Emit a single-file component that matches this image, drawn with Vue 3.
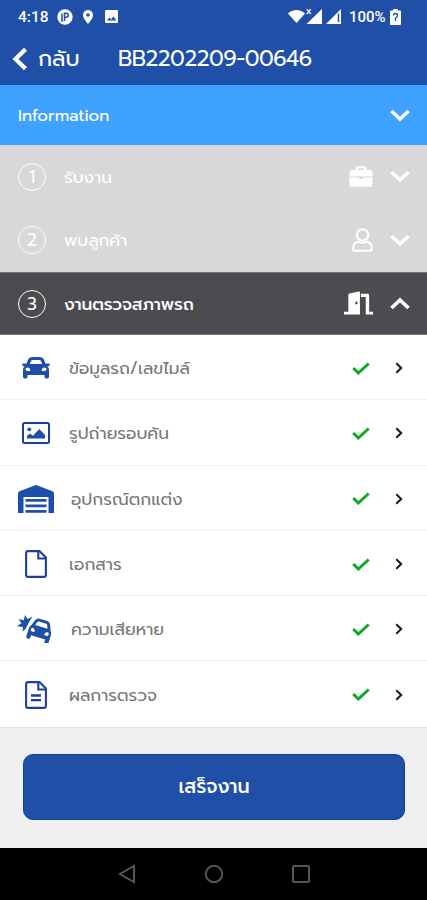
<template>
  <div class="screen">
    <header class="app-header">
      <div class="status-bar">
        <span class="clock">4:18</span>
        <svg class="status-p" viewBox="0 0 16 16">
          <circle cx="8" cy="8" r="7.700" fill="#fff" />
          <path d="M5 13V4.500M7.500 12V4.300h1.700a2 2 0 0 1 0 4H7.500" fill="none" stroke="#1f4fa7" stroke-width="1.500" />
        </svg>
        <svg class="status-pin" viewBox="0 0 10 14">
          <path fill="#fff" fill-rule="evenodd" d="M5 0a5 5 0 0 1 5 5c0 3.500-5 9-5 9S0 8.500 0 5a5 5 0 0 1 5-5zm0 3.200a1.800 1.800 0 1 0 0 3.600 1.800 1.800 0 0 0 0-3.600z" />
        </svg>
        <svg class="status-pic" viewBox="0 0 13 13">
          <rect width="13" height="13" rx="1.200" fill="#fff" />
          <path d="M2 10.500l2.400-3 1.700 1.900 2.300-3.100 3 4.200z" fill="#1f4fa7" />
        </svg>
        <span class="spacer"></span>
        <svg class="status-net" viewBox="0 0 54 17">
          <path d="M0 5.500C4.500.8 12.500.8 17 5.500L8.500 15z" fill="#fff" />
          <path d="M18.500 16L34 1v15z" fill="#fff" />
          <path d="M18.800 1.200l4 4.800M22.800 1.200l-4 4.800" stroke="#fff" stroke-width="1.200" />
          <path d="M38 16L53 1v15z" fill="#fff" />
          <path d="M50.500 5.500v8.500" stroke="#1f4fa7" stroke-width="1.500" />
        </svg>
        <span class="percent">100%</span>
        <svg class="status-battery" viewBox="0 0 11 16">
          <path d="M3.300 0h4.400v1.500H10a1 1 0 0 1 1 1V15a1 1 0 0 1-1 1H1a1 1 0 0 1-1-1V2.500a1 1 0 0 1 1-1h2.300z" fill="#fff" />
          <path d="M3.500 6.500q0-2 2-2t2 2q0 1.400-2 2.800V12" fill="none" stroke="#1f4fa7" stroke-width="1.300" />
        </svg>
      </div>
      <div class="title-bar">
        <svg class="back-icon" viewBox="0 0 16 24">
          <path d="M13.500 2.200L3.500 12l10 9.800" fill="none" stroke="#fff" stroke-width="4.300" />
        </svg>
        <span class="back-text">กลับ</span>
        <h1>BB2202209-00646</h1>
      </div>
    </header>

    <div class="info-bar" @click="infoOpen = !infoOpen">
      <span>Information</span>
      <svg class="chevron" :class="{ up: infoOpen }" viewBox="0 0 20 13">
        <path d="M1.500 2L10 10l8.500-8" />
      </svg>
    </div>

    <div
      v-for="step in steps"
      :key="step.no"
      class="step"
      :class="{ active: step.no === current }"
      @click="current = step.no"
    >
      <span class="step-no">{{ step.no }}</span>
      <span class="step-name">{{ step.name }}</span>
      <svg v-if="step.icon === 'briefcase'" class="step-icon briefcase" viewBox="0 0 24 21">
        <path fill="#fff" fill-rule="evenodd" d="M6.500 4V2.200Q6.500.3 8.500.3h7q2 0 2 1.900V4h4Q23.500 4 23.500 6v4.500H.5V6Q.5 4 2.500 4zm2.300 0h6.400V2.500H8.800zM.5 11.500h9.500v.8q0 .8.800.8h2.400q.8 0 .8-.8v-.8h9.500v7.200q0 2-2 2h-19q-2 0-2-2z" />
      </svg>
      <svg v-else-if="step.icon === 'user'" class="step-icon user" viewBox="0 0 21 24">
        <g fill="none" stroke="#fff" stroke-width="2">
          <circle cx="10.500" cy="7" r="5.700" />
          <path d="M6 13.800Q1.200 15 1.200 20v1q0 1.800 1.800 1.800h15q1.800 0 1.800-1.800v-1q0-5-4.800-6.200-4.500 2-9 0z" />
        </g>
      </svg>
      <svg v-else class="step-icon door" viewBox="0 0 30 25">
        <path fill="#fff" fill-rule="evenodd" d="M0 21h4.500V3.500q0-1 1-1.300L15.500.1q1-.2 1 .9v23H0zM12.800 10.500a1.200 1.500 0 1 0 0 3 1.200 1.500 0 0 0 0-3zM17.500 2.500h7q1.500 0 1.500 1.500v17h4v3h-7.500V5.800h-5z" />
      </svg>
      <svg class="chevron" :class="{ up: step.no === current }" viewBox="0 0 20 13">
        <path d="M1.500 2L10 10l8.500-8" />
      </svg>
    </div>

    <ul class="task-list">
      <li v-for="task in tasks" :key="task.icon" :class="task.icon">
        <span class="task-icon">
          <svg v-if="task.icon === 'car'" width="28" height="22" viewBox="0 0 28 22">
            <path fill="#1d4ea8" fill-rule="evenodd" d="M4.500 6.500L6 2.700Q7 0 10 0h8q3 0 4 2.700l1.500 3.800H27q1 0 .8 1l-.3 1q-.2.700-1 .7h-1.200Q27 10.500 27 13v6.500q0 2-1.500 2H24q-1.500 0-1.500-2V18h-17v1.500q0 2-1.500 2H2.500q-1.500 0-1.500-2V13q0-2.500 1.700-3.800H1.500q-.8 0-1-.7l-.3-1q-.2-1 .8-1zm3.300.5h12.400l-1.300-3.100q-.3-.9-1.400-.9h-7q-1.100 0-1.400.9zM5.500 10.500a2 1.700 0 1 0 0 3.400h2q1 0 .7-1.200-.5-2.200-2.700-2.200zm17 0q-2.200 0-2.700 2.200-.3 1.200.7 1.200h2a2 1.700 0 1 0 0-3.400z" />
          </svg>
          <svg v-else-if="task.icon === 'photo'" width="28" height="22" viewBox="0 0 28 22">
            <rect x="1" y="1" width="26" height="20" rx="1.500" fill="none" stroke="#1d40a0" stroke-width="2" />
            <circle cx="7.300" cy="7.300" r="1.900" fill="#1d4ea8" />
            <path d="M5 16.500V14l3-2.500 3 2.200L17.300 7l5.700 6v3.500z" fill="#1d4ea8" />
          </svg>
          <svg v-else-if="task.icon === 'garage'" width="36" height="28" viewBox="0 0 36 28">
            <path fill="#1d4ea8" d="M0 28V8.500Q0 7 1.500 6.300L16.500.4q1.500-.6 3 0l15 5.900Q36 7 36 8.500V28h-5.500V12H5.500v16zM7.500 14h21v2.700h-21zM7.500 19.500h21v2.700h-21zM7.500 25h21v2.700h-21z" />
          </svg>
          <svg v-else-if="task.icon === 'car-crash'" width="37" height="28" viewBox="0 0 37 28">
            <path fill="#1d4ea8" d="M15.500 1.500L12 7 8.500 14l-3 2.500.5-4.200L0 11l4.500-2.700L1.500 4l5.300 1.200L8 0l2.500 4z" />
            <g transform="translate(14.800 1.300) rotate(17) scale(.87 1.020)">
              <path fill="#1d4ea8" fill-rule="evenodd" d="M2.700 8L5 2.700Q6.300 0 9.500 0h9q3.200 0 4.500 2.700L25.300 8Q27.300 9.700 27.300 13v7q0 2-1.700 2h-1.400q-1.700 0-1.700-2v-2h-17v2q0 2-1.700 2H2.400Q.7 22 .7 20v-7q0-3.300 2-5zm3.800-.8h15l-1.700-3.500q-.5-.9-1.500-.9h-8.600q-1 0-1.500.9zM5.300 10.500a2 1.800 0 1 0 0 3.600h2q1.200 0 .8-1.300-.6-2.300-2.800-2.300zm17.400 0q-2.200 0-2.800 2.300-.4 1.300.8 1.300h2a2 1.800 0 1 0 0-3.600z" />
            </g>
          </svg>
          <svg v-else width="22" height="28" viewBox="0 0 22 28">
            <g fill="none" stroke="#1d3f9f" stroke-width="2.100">
              <path d="M3 1.100h11.500l6.400 6.400V25q0 1.900-1.900 1.900H3q-1.900 0-1.900-1.900V3Q1.100 1.100 3 1.100z" />
              <path d="M13.300 1.500v7h7.200" />
              <path v-if="task.icon === 'file-lines'" d="M6 14.500h10M6 19.200h10" stroke-width="2.300" />
            </g>
          </svg>
        </span>
        <span class="task-name">{{ task.name }}</span>
        <svg class="check" viewBox="0 0 18 13">
          <path d="M1.300 6l5 5L16.700 1.500" fill="none" stroke="#0caa25" stroke-width="3" />
        </svg>
        <svg class="arrow" viewBox="0 0 8 12">
          <path d="M1.300 1.200L6.200 6l-4.900 4.800" fill="none" stroke="#161616" stroke-width="2" />
        </svg>
      </li>
    </ul>

    <footer class="footer">
      <button class="btn-finish">เสร็จงาน</button>
    </footer>

    <nav class="system-nav">
      <svg viewBox="0 0 20 20"><path d="M17 2v16L3 10z" /></svg>
      <svg viewBox="0 0 20 20"><circle cx="10" cy="10" r="8.200" /></svg>
      <svg viewBox="0 0 20 20"><rect x="2" y="2" width="16" height="16" rx="1" /></svg>
    </nav>
  </div>
</template>

<script setup>
import { ref } from 'vue';

const infoOpen = ref(false);
const current = ref(3);

const steps = [
  { no: 1, name: 'รับงาน', icon: 'briefcase' },
  { no: 2, name: 'พบลูกค้า', icon: 'user' },
  { no: 3, name: 'งานตรวจสภาพรถ', icon: 'door' },
];

const tasks = [
  { name: 'ข้อมูลรถ/เลขไมล์', icon: 'car' },
  { name: 'รูปถ่ายรอบคัน', icon: 'photo' },
  { name: 'อุปกรณ์ตกแต่ง', icon: 'garage' },
  { name: 'เอกสาร', icon: 'file' },
  { name: 'ความเสียหาย', icon: 'car-crash' },
  { name: 'ผลการตรวจ', icon: 'file-lines' },
];
</script>

<style>
body {
  margin: 0;
  background: #000;
}
</style>

<style scoped>
.screen {
  width: 427px;
  height: 900px;
  display: flex;
  flex-direction: column;
  overflow: hidden;
  background: #f0f0f0;
  font-family: Prompt, "Noto Sans", "Noto Sans Thai", sans-serif;
  color: #fff;
}

.app-header {
  height: 84.500px;
  flex: none;
  background: #1f4fa7;
}

.status-bar {
  height: 33px;
  display: flex;
  align-items: center;
  padding: 0 26px 0 18px;
  font-family: Roboto, sans-serif;
  font-weight: 500;
  font-size: 15.500px;
}

.clock {
  width: 39px;
}

.status-p {
  width: 16px;
  height: 16px;
}

.status-pin {
  width: 10px;
  height: 14px;
  margin-left: 10px;
}

.status-pic {
  width: 13px;
  height: 13px;
  margin-left: 12px;
}

.spacer {
  flex: 1;
}

.status-net {
  width: 54px;
  height: 17px;
  margin-right: 7px;
}

.percent {
  width: 37px;
  font-size: 15px;
  white-space: nowrap;
}

.status-battery {
  width: 11px;
  height: 16px;
  margin-left: 4px;
}

.title-bar {
  height: 51px;
  display: flex;
  align-items: center;
  padding-left: 12px;
}

.back-icon {
  width: 16px;
  height: 24px;
}

.back-text {
  width: 80px;
  margin-left: 10px;
  font-size: 22px;
  line-height: 40px;
}

.title-bar h1 {
  margin: 0;
  font-size: 22px;
  font-weight: 400;
  line-height: 40px;
  letter-spacing: -0.5px;
}

.info-bar {
  height: 60.500px;
  flex: none;
  box-sizing: border-box;
  display: flex;
  align-items: center;
  justify-content: space-between;
  padding: 2px 17px 0 18px;
  background: #3fa2ff;
  font-size: 16.800px;
}

.chevron {
  width: 20px;
  height: 13px;
  flex: none;
}

.chevron path {
  fill: none;
  stroke: #fff;
  stroke-width: 3.600;
}

.chevron.up {
  transform: rotate(180deg);
}

.step {
  height: 63.500px;
  flex: none;
  box-sizing: border-box;
  display: flex;
  align-items: center;
  padding: 0 17px 0 18px;
  background: #d8d8d8;
}

.step.active {
  height: 63px;
  background: #4c4b50;
  border-top: 1px solid #77767a;
  border-bottom: 1px solid #77767a;
}

.step-no {
  width: 28px;
  height: 28px;
  box-sizing: border-box;
  border: 1.500px solid #fff;
  border-radius: 50%;
  text-align: center;
  font-size: 17px;
  line-height: 27px;
}

.step-name {
  flex: 1;
  margin-left: 18px;
  font-size: 17px;
}

.active .step-name {
  font-weight: 500;
  letter-spacing: -0.150px;
}

.step-icon {
  flex: none;
  margin-right: 17px;
}

.briefcase {
  width: 24px;
  height: 21px;
}

.user {
  width: 21px;
  height: 24px;
}

.door {
  width: 29px;
  height: 25px;
}

.task-list {
  margin: 0;
  padding: 0;
  list-style: none;
  background: #fff;
  border-bottom: 1px solid #e0e0e0;
}

.task-list li {
  height: 65.300px;
  box-sizing: border-box;
  display: flex;
  align-items: center;
  padding: 2px 24px 0 17px;
  border-bottom: 1px solid #f1f1f1;
}

.task-list li:last-child {
  padding-top: 1px;
  border-bottom: none;
}

.task-icon {
  width: 37px;
  display: flex;
  justify-content: center;
}

.task-name {
  flex: 1;
  margin-left: 15px;
  color: #777;
  font-size: 17px;
}

.garage .task-name,
.car-crash .task-name {
  margin-left: 17px;
}

.check {
  width: 18px;
  height: 13px;
  margin-right: 25px;
}

.arrow {
  width: 8px;
  height: 12px;
}

.footer {
  flex: 1;
  padding: 26px 22px 0 23px;
}

.btn-finish {
  display: block;
  width: 100%;
  height: 66px;
  padding: 0;
  border: 1px solid #0f419c;
  border-radius: 10px;
  background: #1f4fa7;
  color: #fff;
  font-family: inherit;
  font-size: 19px;
  font-weight: 500;
  cursor: pointer;
}

.system-nav {
  height: 52.500px;
  flex: none;
  box-sizing: border-box;
  display: flex;
  align-items: center;
  justify-content: center;
  gap: 67px;
  background: #000;
}

.system-nav svg {
  width: 20px;
  height: 20px;
  fill: none;
  stroke: #555;
  stroke-width: 2;
}
</style>
